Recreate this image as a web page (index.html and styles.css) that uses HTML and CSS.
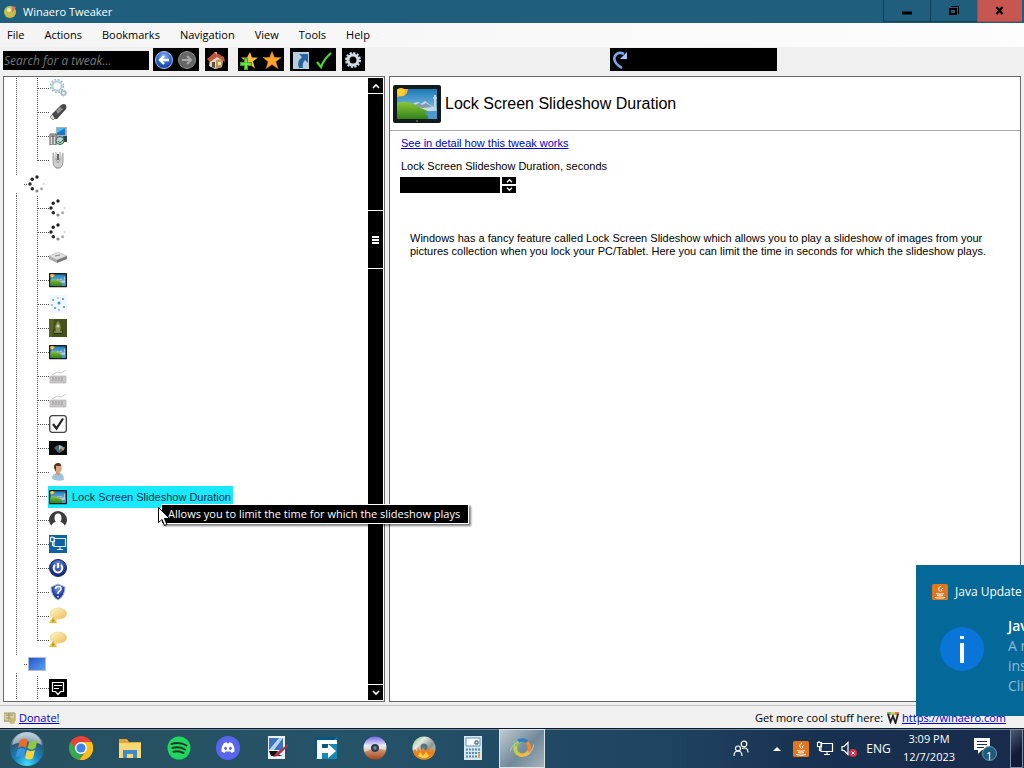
FILE: index.html
```html
<!DOCTYPE html>
<html lang="en">
<head>
<meta charset="utf-8">
<title>Winaero Tweaker</title>
<link rel="stylesheet" href="styles.css">
</head>
<body>
<svg class="defs" aria-hidden="true">
  <defs>
    <linearGradient id="sky" x1="0" y1="0" x2="0" y2="1"><stop offset="0" stop-color="#1d78b8"/><stop offset="1" stop-color="#a8dcee"/></linearGradient>
    <linearGradient id="grass" x1="0" y1="0" x2="0" y2="1"><stop offset="0" stop-color="#8cc63c"/><stop offset="1" stop-color="#2f8418"/></linearGradient>
    <radialGradient id="blueball" cx=".5" cy=".3" r=".7"><stop offset="0" stop-color="#8db8f4"/><stop offset=".6" stop-color="#2c62cc"/><stop offset="1" stop-color="#163a94"/></radialGradient>
    <radialGradient id="navyball" cx=".5" cy=".3" r=".7"><stop offset="0" stop-color="#7f9ae0"/><stop offset=".6" stop-color="#2343a8"/><stop offset="1" stop-color="#101f70"/></radialGradient>
    <radialGradient id="orb" cx=".5" cy=".95" r=".95"><stop offset="0" stop-color="#3fe0ff"/><stop offset=".4" stop-color="#1584bd"/><stop offset=".75" stop-color="#2c5672"/><stop offset="1" stop-color="#b8cfda"/></radialGradient>
    <linearGradient id="bubble" x1="0" y1="0" x2="1" y2="1"><stop offset="0" stop-color="#fff6c8"/><stop offset="1" stop-color="#ecbd55"/></linearGradient>
    <linearGradient id="blueScreen" x1="0" y1="0" x2="1" y2="1"><stop offset="0" stop-color="#2458c8"/><stop offset="1" stop-color="#5e9df0"/></linearGradient>
    <linearGradient id="disc" x1="0" y1="0" x2="0" y2="1"><stop offset="0" stop-color="#7466e8"/><stop offset=".4" stop-color="#e6e6f4"/><stop offset=".6" stop-color="#c89470"/><stop offset="1" stop-color="#a8431c"/></linearGradient>
    <linearGradient id="silver" x1="0" y1="0" x2="1" y2="1"><stop offset="0" stop-color="#72c46a"/><stop offset=".3" stop-color="#e4e7e4"/><stop offset=".6" stop-color="#8e9694"/><stop offset="1" stop-color="#d8e4c4"/></linearGradient>
    <symbol id="picture" viewBox="0 0 48 38"><rect width="48" height="38" rx="2" fill="#14191b"/><rect x="4" y="4" width="40" height="30" fill="url(#sky)"/><path d="M16 21l5-3 4-1 3 2 4-3 5 4 6 3v5l-14-2z" fill="#c4dbe6"/><path d="M22 20l4-2 3 2 4-2 6 4-10 1z" fill="#7f9cab"/><path d="M4 18q12-4 24 5 8 4 12 5l-4 6H4z" fill="url(#grass)"/><path d="M32 28q6-3 12-2v8h-9q1-3-3-6z" fill="#4b98cf"/><path d="M41 10h2v16h-2zM40 12h4v2h-4z" fill="#bed3df"/><path d="M4 4h11l-1 4-3 3-7 1z" fill="#ffb319"/><circle cx="8" cy="7" r="4" fill="#ffcc32"/><path d="M23 36h2" stroke="#8a9294"/></symbol>
    <symbol id="spinner" viewBox="0 0 18 18"><g fill="#222"><circle cx="9" cy="2" r="1.700"/><circle cx="4.200" cy="4.200" r="1.700"/><circle cx="2" cy="9" r="1.700"/><circle cx="4.300" cy="13.700" r="1.700"/><circle cx="9" cy="16" r="1.600" fill="#888"/><circle cx="13.600" cy="13.700" r="1.500" fill="#aaa"/><circle cx="15.700" cy="9" r="1.200" fill="#ddd"/></g></symbol>
    <symbol id="gears" viewBox="0 0 18 18"><circle cx="8" cy="7" r="4.600" fill="none" stroke="#b5cfdb" stroke-width="2"/><circle cx="8" cy="7" r="6.400" fill="none" stroke="#9bbac9" stroke-width="1.600" stroke-dasharray="1.800 1.550"/><circle cx="14.500" cy="14" r="2" fill="none" stroke="#a5bfcb" stroke-width="1.600"/><circle cx="14.500" cy="14" r="3" fill="none" stroke="#8eabba" stroke-dasharray="1 1"/></symbol>
    <symbol id="usb" viewBox="0 0 18 18"><path d="M1 14l3-3 3 3-3 3z" fill="#e0e0e0" stroke="#777" stroke-width=".8"/><path d="M3 11l9-9q3-2 5 0 1 2 0 4l-9 10H6z" fill="#484848"/><path d="M7 8l4-4 3 2-5 5z" fill="#909090"/></symbol>
    <symbol id="computer" viewBox="0 0 18 18"><path d="M7 0h11v10H7z" fill="#a9b1ba"/><path d="M8 1h8v7H8z" fill="#1679c7"/><path d="M8 1h8L8 6z" fill="#57b9ee"/><path d="M1 7h6v11H1z" fill="#dedede" stroke="#555"/><path d="M2 9h4M4 9v8" stroke="#444"/><circle cx="11" cy="13.500" r="4" fill="#b9d8c5" stroke="#3b5d64"/><path d="M9 14l2 2 4-4" stroke="#2b7051" fill="none"/><path d="M14 9h4v6h-3z" fill="#38424f"/></symbol>
    <symbol id="mouse" viewBox="0 0 18 18"><path d="M4 0v10q0 8 5 8t5-8V0q-2 4-2 7H6q0-4-2-7z" fill="#cfcfcf"/><path d="M4 2v8q0 7 5 7t5-7V2M7 1v8l2 3 2-3V1" fill="none" stroke="#9c9c9c"/><path d="M9 3v6" stroke="#666" stroke-width="2"/></symbol>
    <symbol id="drive" viewBox="0 0 18 18"><path d="M0 9l9-4 9 4-10 4z" fill="#dedede" stroke="#b5b5b5" stroke-width=".6"/><path d="M0 9l8 4v3l-8-4z" fill="#aaa"/><path d="M8 13l10-4v3L8 16z" fill="#777"/><path d="M6 9l5-1" stroke="#888"/></symbol>
    <symbol id="dots" viewBox="0 0 18 18"><rect width="18" height="18" fill="#f0f7ff"/><g fill="#4f8ad0"><circle cx="10" cy="8" r="1.500"/><circle cx="4" cy="5" r="1"/><circle cx="14" cy="4" r="1"/><circle cx="15" cy="12" r="1"/><circle cx="6" cy="13" r="1"/><circle cx="10" cy="15" r=".8"/><circle cx="3" cy="10" r=".8"/><circle cx="9" cy="3" r=".7"/></g></symbol>
    <symbol id="plant" viewBox="0 0 18 18"><rect width="18" height="18" fill="#44521b"/><path d="M0 0h5l-2 18H0z" fill="#566626"/><path d="M9 2q4 4 2 10H7Q5 6 9 2z" fill="#81904d"/><circle cx="9" cy="7" r="1.500" fill="#d8d6a8"/><path d="M4 11q5 5 10 0l-1 4H5z" fill="#292d18"/><path d="M5 13h8" stroke="#c4c99a"/></symbol>
    <symbol id="keyboard" viewBox="0 0 18 18"><path d="M1 9h16v7H1z" fill="#c9c7c7" stroke="#aaa" stroke-width=".6"/><path d="M3 11h12M3 13h12" stroke="#999" stroke-dasharray="2 1"/><path d="M3 8l5-3 4 1 5-3" fill="none" stroke="#bbb" stroke-width=".8"/></symbol>
    <symbol id="checkbox" viewBox="0 0 18 18"><rect x=".7" y=".7" width="16.600" height="16.600" rx="2.500" fill="#fff" stroke="#444" stroke-width="1.300"/><path d="M4 9l3.500 4.500L14 3.500" fill="none" stroke="#222" stroke-width="2.200"/></symbol>
    <symbol id="darkscreen" viewBox="0 0 18 18"><path d="M0 2h18v14H0z" fill="#080a0c"/><path d="M5 9q5-6 11 0-2 4-6 5z" fill="#53616c"/><path d="M10 6l4 2-4 3z" fill="#94c6db"/><path d="M12 9l4-1-2 4z" fill="#d6953c"/><path d="M8 10l3 2-3 1z" fill="#55748c"/></symbol>
    <symbol id="person" viewBox="0 0 18 18"><path d="M3 16q0-6 5-6h3q4 1 4 7-6 2-12-1z" fill="#9fc4df"/><path d="M7 8h4l-1 5-3-2z" fill="#cd966e"/><ellipse cx="9.500" cy="5" rx="3.300" ry="4.500" fill="#d8a884"/><path d="M9.500 0q-5 0-4.500 5l2 4V3h5q0-3-2.500-3z" fill="#55341f"/></symbol>
    <symbol id="user" viewBox="0 0 18 18"><circle cx="9" cy="9" r="9" fill="#3c3c3c"/><ellipse cx="9" cy="7" rx="3.500" ry="4.500" fill="#fff"/><path d="M2 15q2-4 5-4h4q3 0 5 4-3 4-7 3-4 1-7-3z" fill="#fff"/></symbol>
    <symbol id="network" viewBox="0 0 18 18"><path d="M5 3.500h11.500v8H5zM11 11.500v3M8 14.500h6M1.500 2.500h4v4h-4zM3.500 6.500v4H5M3 1v2" fill="none" stroke="currentColor" stroke-width="1.200"/></symbol>
    <symbol id="power" viewBox="0 0 18 18"><circle cx="9" cy="9" r="8.500" fill="url(#navyball)" stroke="#152765"/><path d="M6 6a4.300 4.300 0 1 0 6 0M9 4v5" fill="none" stroke="#fff" stroke-width="2"/></symbol>
    <symbol id="shield" viewBox="0 0 18 18"><path d="M9 1l7 3q0 9-7 13-7-4-7-13z" fill="url(#navyball)" stroke="#a9b8d5"/><path d="M6.500 6q0-2.500 3-2.500t2.500 3L9 9.500V11m0 2v1.500" stroke="#fff" fill="none" stroke-width="1.500"/></symbol>
    <symbol id="balloon" viewBox="0 0 18 18"><ellipse cx="9.500" cy="6.500" rx="8.300" ry="5.500" fill="url(#bubble)" stroke="#e6ce8b" stroke-width=".6"/><path d="M4 11l4 1-1 4z" fill="#f2d57d"/><path d="M4 10l4 6H0z" fill="#e7bd34"/><path d="M4 12v3" stroke="#a08028"/></symbol>
    <symbol id="desktop" viewBox="0 0 18 18"><path d="M0 2h18v14H0z" fill="#aabddd"/><path d="M1 3h16v12H1z" fill="url(#blueScreen)"/></symbol>
    <symbol id="message" viewBox="0 0 18 18"><rect width="18" height="18"/><path d="M3.500 3.500h11v9h-3L9 15.500l-2.500-3h-3zM5 6.500h8M5 9.500h5" fill="none" stroke="#fff" stroke-width="1.200"/></symbol>
    <symbol id="java" viewBox="0 0 16 16"><rect width="16" height="16" rx="1.500" fill="#e1761f"/><path d="M9 2q-4 2-2 4t1 2M11 4q-3 2-1 3M4 9.500q4 1.500 8 0M5 11.500q3 1 6 0M3 13.500q5 1.500 10 0" stroke="#fff" fill="none"/></symbol>
    <symbol id="logo" viewBox="0 0 24 24"><g fill="none" stroke-width="3.600"><path d="M5 14a8 8 0 0 1 6-9" stroke="#8dc852"/><path d="M8 5q7-3 11 3" stroke="#327fc6"/><path d="M17 6q5 6 0 12" stroke="#f18a32"/><path d="M19 16q-7 6-12 1" stroke="#f3ba38"/><path d="M8 18q-4-4-2-8" stroke="#bed048"/></g><path d="M0 15Q3 7 9 6M24 8q-2 10-9 12" fill="none" stroke="#b9c9b9"/></symbol>
  </defs>
</svg>

<div class="window">
  <header class="titlebar">
    <svg class="app-icon" viewBox="0 0 14 14"><circle cx="7" cy="7" r="6" fill="#c9bc4a"/><path d="M2 4q3-4 7-2L6 7z" fill="#a5c975"/><path d="M9 1l4 1-4 6z" fill="#d6785b"/><circle cx="6" cy="5" r="2" fill="#f0eba5"/></svg>
    <h1 class="title">Winaero Tweaker</h1>
    <div class="window-buttons">
      <button class="win-btn" aria-label="Minimize"><svg viewBox="0 0 12 12"><path d="M1 8h10" stroke="#000" stroke-width="3"/></svg></button>
      <button class="win-btn" aria-label="Restore"><svg viewBox="0 0 12 12"><path d="M2 4h6v5H2z" fill="none" stroke="#000" stroke-width="2"/><path d="M3 1.500h7.500V9" fill="none" stroke="#000"/></svg></button>
      <button class="win-btn close" aria-label="Close"><svg viewBox="0 0 12 12"><path d="M2.500 2l6 7M8.500 2l-6 7" stroke="#000" stroke-width="2.200"/></svg></button>
    </div>
  </header>

  <nav class="menubar">
    <button>File</button><button>Actions</button><button>Bookmarks</button><button>Navigation</button><button>View</button><button>Tools</button><button>Help</button>
  </nav>

  <div class="toolbar">
    <input class="search" type="text" placeholder="Search for a tweak..." aria-label="Search for a tweak">
    <div class="tools">
      <button aria-label="Back"><svg viewBox="0 0 20 20"><circle cx="10" cy="10" r="8.500" fill="url(#blueball)" stroke="#a9c5f1"/><path d="M15 10H6m4-4l-4 4 4 4" fill="none" stroke="#fff" stroke-width="2.400"/></svg></button>
      <button aria-label="Forward"><svg viewBox="0 0 20 20"><circle cx="10" cy="10" r="8.500" fill="#666" stroke="#8b8b8b"/><path d="M5 10h9m-4-4l4 4-4 4" fill="none" stroke="#aaa" stroke-width="2"/></svg></button>
    </div>
    <div class="tools home">
      <button aria-label="Home"><svg viewBox="0 0 20 20"><path d="M4 9l6-5 7 5-1 8-7 2-6-3z" fill="#e4d7ba"/><path d="M10 10l7-1-1 8-6 2z" fill="#b79967"/><path d="M1 9l8-7 9 5 1 5-8-5-7 5z" fill="#bd563c"/><path d="M8 2h3v3z" fill="#ef9a79"/><path d="M6 12h3v6l-3-1z" fill="#63503e"/><path d="M12 12h3v3h-3z" fill="#f5e2a1"/></svg></button>
    </div>
    <div class="tools bookmarks">
      <button aria-label="Add bookmark"><svg viewBox="0 0 20 20"><path d="M11 2l2 5.500h6l-5 4 2 7-5-4-5 4 1-7-5-4h6z" fill="#f6ba40"/><path d="M5 8h4v4h4v4H9v4H5v-4H1v-4h4z" fill="#36a826"/><path d="M7 9v10M2 14h10" stroke="#8aea55" stroke-width="1.500"/></svg></button>
      <button aria-label="Bookmarks"><svg viewBox="0 0 20 20"><path d="M10 1.500l2.400 6H19l-5.200 4.200 2 6.800-5.800-4-5.800 4 2-6.800L1 7.500h6.600z" fill="#ffa329" stroke="#d98219" stroke-width=".6"/></svg></button>
    </div>
    <div class="tools">
      <button aria-label="Shortcut"><svg viewBox="0 0 20 20"><rect x="2" y="2" width="16" height="17" fill="#b9cde1"/><path d="M8 4h9v9l-3-3q-3 3-2 8H8q-3-6 3-11z" fill="#28659f"/></svg></button>
      <button aria-label="Apply"><svg viewBox="0 0 20 20"><path d="M3 12l4 5Q10 9 17 3" fill="none" stroke="#45dc2f" stroke-width="2.200"/></svg></button>
    </div>
    <div class="tools">
      <button aria-label="Settings"><svg viewBox="0 0 20 20"><circle cx="10" cy="10" r="5" fill="none" stroke="#d3dce4" stroke-width="3"/><circle cx="10" cy="10" r="7" fill="none" stroke="#d3dce4" stroke-width="2" stroke-dasharray="2.200 1.465"/></svg></button>
    </div>
    <button class="revert" aria-label="Revert"><svg viewBox="0 0 20 20"><path d="M11 18Q1 12 4 6q3-5 9-2" fill="none" stroke="#79a5ee" stroke-width="2.600"/><path d="M16 2v7H9z" fill="#a1c5ff"/></svg></button>
  </div>

  <main class="panes">
    <section class="pane tree-pane">
      <ul class="tree">
        <li class="row"><svg><use href="#gears"/></svg></li>
        <li class="row"><svg><use href="#usb"/></svg></li>
        <li class="row"><svg><use href="#computer"/></svg></li>
        <li class="row last"><svg><use href="#mouse"/></svg></li>
        <li class="row group"><svg><use href="#spinner"/></svg></li>
        <li class="row"><svg><use href="#spinner"/></svg></li>
        <li class="row"><svg><use href="#spinner"/></svg></li>
        <li class="row"><svg><use href="#drive"/></svg></li>
        <li class="row"><svg><use href="#picture"/></svg></li>
        <li class="row"><svg><use href="#dots"/></svg></li>
        <li class="row"><svg><use href="#plant"/></svg></li>
        <li class="row"><svg><use href="#picture"/></svg></li>
        <li class="row"><svg><use href="#keyboard"/></svg></li>
        <li class="row"><svg><use href="#keyboard"/></svg></li>
        <li class="row"><svg><use href="#checkbox"/></svg></li>
        <li class="row"><svg><use href="#darkscreen"/></svg></li>
        <li class="row"><svg><use href="#person"/></svg></li>
        <li class="row"><a class="selected" href="#slideshow"><svg><use href="#picture"/></svg><span>Lock Screen Slideshow Duration</span></a></li>
        <li class="row"><svg><use href="#user"/></svg></li>
        <li class="row"><svg class="net"><use href="#network"/></svg></li>
        <li class="row"><svg><use href="#power"/></svg></li>
        <li class="row"><svg><use href="#shield"/></svg></li>
        <li class="row"><svg><use href="#balloon"/></svg></li>
        <li class="row last"><svg><use href="#balloon"/></svg></li>
        <li class="row group"><svg><use href="#desktop"/></svg></li>
        <li class="row"><svg><use href="#message"/></svg></li>
      </ul>
      <div class="scrollbar">
        <button aria-label="Scroll up"><svg viewBox="0 0 8 6"><path d="M1 5l3-3 3 3" fill="none" stroke="#fff" stroke-width="1.600"/></svg></button>
        <div class="track-top"></div>
        <div class="thumb"><i></i><i></i><i></i></div>
        <div class="track-bottom"></div>
        <button aria-label="Scroll down"><svg viewBox="0 0 8 6"><path d="M1 1l3 3 3-3" fill="none" stroke="#fff" stroke-width="1.600"/></svg></button>
      </div>
    </section>

    <section class="pane detail" id="slideshow">
      <div class="detail-head">
        <svg class="hero" viewBox="0 0 48 38"><use href="#picture"/></svg>
        <h2>Lock Screen Slideshow Duration</h2>
      </div>
      <div class="detail-body">
        <a class="more" href="#detail">See in detail how this tweak works</a>
        <label for="seconds">Lock Screen Slideshow Duration, seconds</label>
        <div class="spin">
          <input id="seconds" type="text">
          <div class="spin-buttons">
            <button aria-label="Increase"><svg viewBox="0 0 8 6"><path d="M1 5l3-3 3 3" fill="none" stroke="#fff" stroke-width="1.600"/></svg></button>
            <button aria-label="Decrease"><svg viewBox="0 0 8 6"><path d="M1 1l3 3 3-3" fill="none" stroke="#fff" stroke-width="1.600"/></svg></button>
          </div>
        </div>
        <p class="description">Windows has a fancy feature called Lock Screen Slideshow which allows you to play a slideshow of images from your pictures collection when you lock your PC/Tablet. Here you can limit the time in seconds for which the slideshow plays.</p>
      </div>
    </section>
  </main>

  <footer class="statusbar">
    <svg class="donate-icon" viewBox="0 0 12 12"><path d="M0 1h11v9H0z" fill="#d9d0a5"/><path d="M0 1h11v8H0zM2 3h7M2 6h5M5 1v8" fill="none" stroke="#9e9668"/><circle cx="8" cy="9" r="3" fill="#c9b976"/></svg>
    <a href="#donate">Donate!</a>
    <span class="cool">Get more cool stuff here:</span>
    <svg class="w-icon" viewBox="0 0 12 12"><path d="M0 0h12v3H0z" fill="#e8ce62"/><path d="M0 0h4v3H0z" fill="#79b765"/><path d="M8 0h4v3H8z" fill="#da795d"/><path d="M1 2l2.500 8L6 4l2.500 7L11 2" fill="none" stroke="#222" stroke-width="1.800"/></svg>
    <a href="#winaero">https://winaero.com</a>
  </footer>
</div>

<div class="tooltip" role="tooltip">Allows you to limit the time for which the slideshow plays</div>
<svg class="cursor" viewBox="0 0 12 19"><path d="M.5.5v15l3.500-3 2.500 6 2.500-1-2.500-6h5z" fill="#fff" stroke="#000"/></svg>

<aside class="toast">
  <div class="toast-head"><svg><use href="#java"/></svg><span>Java Update</span></div>
  <div class="toast-body">
    <svg viewBox="0 0 44 44"><circle cx="22" cy="22" r="22" fill="#0975d8"/><path d="M20 16h4v20h-4zM20 9h4v3h-4z" fill="#fff"/></svg>
    <div class="toast-text"><strong>Jav</strong><span>A n</span><span>ins</span><span>Cli</span></div>
  </div>
</aside>

<nav class="taskbar">
  <button class="start" aria-label="Start"><svg viewBox="0 0 36 36"><circle cx="18" cy="18" r="17" fill="url(#orb)"/><path d="M3 14Q6 2 18 2t15 12q-14-7-30 0z" fill="#d7e4ea" opacity=".6"/><path d="M11 9q4-3 8 0l-2 8q-4-3-8 0z" fill="#eb6a2e"/><path d="M20.500 10q4 2 8-1l-2 8q-4 3-8 0z" fill="#93c83d"/><path d="M8.500 18.500q4-3 8 0l-2 8q-4-3-8 0z" fill="#3c93e0"/><path d="M18 19q4 2 8 0l-2 8q-4 3-8 0z" fill="#ffd13d"/></svg></button>
  <button class="task" aria-label="Chrome"><svg viewBox="0 0 24 24"><circle cx="12" cy="12" r="12" fill="#e84335"/><path d="M1.600 6a12 12 0 0 0 8.900 17.900L17 13H7z" fill="#35a853"/><path d="M22.500 6H12v6l5 3-6.500 9A12 12 0 0 0 22.500 6z" fill="#fbbd17"/><circle cx="12" cy="12" r="6" fill="#fff"/><circle cx="12" cy="12" r="4.600" fill="#3f82e8"/></svg></button>
  <button class="task" aria-label="File Explorer"><svg viewBox="0 0 24 24"><path d="M1 3h8l2 3h12v4H1z" fill="#e5a52f"/><path d="M1 7h22v15H1z" fill="#f8d776"/><path d="M5 14h14v8h-4v-4H9v4H5z" fill="#3f8bc9"/></svg></button>
  <button class="task" aria-label="Spotify"><svg viewBox="0 0 24 24"><circle cx="12" cy="12" r="11.500" fill="#20d760"/><path d="M4.500 8q8-2.500 15 1.500M5.500 12q6.500-2 12.500 1.500M6.500 15.800q5-1.500 10 1.200" fill="none" stroke="#153827" stroke-width="2" stroke-linecap="round"/></svg></button>
  <button class="task" aria-label="Discord"><svg viewBox="0 0 24 24"><circle cx="12" cy="12" r="12" fill="#5865ec"/><path d="M8 7l2.500-.7.600 1h1.800l.6-1L16 7q3 4 2.500 8.500l-3 1.500-1-1.500h-5l-1 1.500-3-1.500Q5 11 8 7z" fill="#fff"/><ellipse cx="9.600" cy="12.300" rx="1.400" ry="1.600" fill="#5865ec"/><ellipse cx="14.400" cy="12.300" rx="1.400" ry="1.600" fill="#5865ec"/></svg></button>
  <button class="task" aria-label="Screen editor"><svg viewBox="0 0 24 24"><path d="M3 0h17v23H3z" fill="#edf1f6"/><path d="M4 2h14v12H4z" fill="#3d72c4"/><path d="M4 14L14 2h4L9 14z" fill="#b7d5f3"/><path d="M4 15h9l-2 3 7 2H6z" fill="#111"/><path d="M23 8L11 17l-3 4 5-1L23 10z" fill="#ac354b"/></svg></button>
  <button class="task" aria-label="Transfer"><svg viewBox="0 0 24 24"><path d="M1 1h22v22H1z" fill="#1686b5"/><path d="M1 1h22L1 23z" fill="#06567e"/><path d="M3 4h20v4H8v4h6V8l8 7-8 7v-5H8v6H3z" fill="#fff"/></svg></button>
  <button class="task" aria-label="Disc utility"><svg viewBox="0 0 24 24"><circle cx="12" cy="12" r="11.500" fill="url(#disc)"/><path d="M12 12L1 8v8zM12 12l11-5v7z" fill="#f1f1fa" opacity=".6"/><circle cx="12" cy="12" r="4" fill="#333b4d"/><circle cx="12" cy="12" r="1.700" fill="#718c9c"/></svg></button>
  <button class="task" aria-label="Disc burner"><svg viewBox="0 0 24 24"><circle cx="12" cy="12" r="11.500" fill="url(#silver)"/><circle cx="12" cy="11" r="3.500" fill="#56767d"/><path d="M1 15l2-2 2 3 1-5 3 5 2-5 3 5 3-5 1 4 3-2 2 2q-2 8.500-11 8.500T1 15z" fill="#ef811d"/><path d="M6 20l2-4 3 4 3-4 3 4q-5 4-11 0z" fill="#ffd545"/></svg></button>
  <button class="task" aria-label="Calculator"><svg viewBox="0 0 24 24"><path d="M3 0h18v24H3z" fill="#d4e9f3"/><path d="M5 2h14v8H5z" fill="#fff" stroke="#5e91b3"/><path d="M14 5h3v3h-3z" fill="none" stroke="#264c68"/><path d="M5 13.500h14M5 17h14M5 20.500h14" stroke="#588cae" stroke-width="2" stroke-dasharray="2 1"/><path d="M17 17h2v5h-2z" fill="#eaa336"/></svg></button>
  <button class="task active" aria-label="Winaero Tweaker"><svg><use href="#logo"/></svg></button>

  <div class="tray">
    <button class="people" aria-label="People"><svg viewBox="0 0 18 18" fill="none" stroke="#fff" stroke-width="1.200"><circle cx="12" cy="4" r="2.800"/><circle cx="6" cy="8.500" r="2.500"/><path d="M2 16q0-5 4-5t4 5M10 8.500q6-2 6 4"/></svg></button>
    <button class="tray-btn" aria-label="Show hidden icons"><svg viewBox="0 0 16 16"><path d="M4 10l4-4 4 4z" fill="#fff"/></svg></button>
    <button class="tray-btn" aria-label="Java"><svg><use href="#java"/></svg></button>
    <button class="tray-btn" aria-label="Network"><svg class="tray-net"><use href="#network"/></svg></button>
    <button class="tray-btn" aria-label="Volume muted"><svg viewBox="0 0 16 16"><path d="M1 5.500h2l4-4v12l-4-4H1z" fill="none" stroke="#fff" stroke-width="1.200"/><circle cx="12" cy="12" r="4" fill="#d83246"/><path d="M10.500 10.500l3 3m0-3l-3 3" stroke="#fff"/></svg></button>
    <button class="lang">ENG</button>
    <button class="clock"><span>3:09 PM</span><span>12/7/2023</span></button>
    <button class="notify" aria-label="1 notification"><svg viewBox="0 0 24 24"><path d="M1 1h16v12H9l-4 4v-4H1z" fill="#fff"/><path d="M4 4.500h10M4 7.500h10M4 10.500h7" stroke="#1b3454"/><circle cx="16.500" cy="16.500" r="7" fill="#1c5c78" stroke="#6e9eaf"/></svg><span>1</span></button>
    <button class="peek" aria-label="Show desktop"></button>
  </div>
</nav>
</body>
</html>
```
FILE: styles.css
```css
* { box-sizing: border-box; }
html, body { height: 100%; }
body {
  margin: 0;
  display: flex;
  flex-direction: column;
  overflow: hidden;
  background: #f0f0f0;
  color: #000;
  font-family: "Open Sans", "Noto Sans", sans-serif;
  font-size: 11px;
}
button { border: 0; padding: 0; background: none; color: inherit; font: inherit; }
input { border: 0; border-radius: 0; }
h1, h2, p, ul { margin: 0; padding: 0; font-weight: normal; }
svg { display: block; flex: none; }
a { color: #0000d0; }
.defs { position: absolute; width: 0; height: 0; }

.window { flex: 1; min-height: 0; display: flex; flex-direction: column; }

/* Title bar */
.titlebar { display: flex; align-items: center; height: 23px; background: #205e7e; color: #fff; }
.app-icon { width: 14px; height: 14px; margin: 0 6px 0 3px; }
.title { flex: 1; font-size: 11px; }
.window-buttons { display: flex; align-self: flex-start; padding-right: 2px; }
.win-btn { display: flex; align-items: center; justify-content: center; width: 47px; height: 22px; border-left: 1px solid #123f57; border-bottom: 1px solid #123f57; }
.win-btn svg { width: 12px; height: 12px; }
.win-btn.close { width: 45px; background: #c75650; border-color: #a04c4c; }

/* Menu bar */
.menubar { display: flex; align-items: center; gap: 20px; height: 24px; padding: 0 0 2px 7px; background: linear-gradient(90deg, #f4f4f4, #fdfdfd); }

/* Toolbar */
.toolbar { display: flex; height: 29px; padding: 1px 3px; }
.search { width: 146px; height: 19px; margin: 3px 4px 0 0; padding: 0 1px; background: #000; color: #fff; font: italic 12px "Open Sans", sans-serif; }
.search::placeholder { color: #777; opacity: 1; }
.tools { display: flex; height: 23px; margin-right: 6px; background: #000; }
.tools.home { margin-right: 10px; }
.tools button, .revert { display: flex; align-items: center; padding-left: 1px; width: 23px; height: 23px; }
.tools svg, .revert svg { width: 20px; height: 20px; }
.revert { width: 167px; margin-left: 239px; background: #000; }

/* Panes */
.panes { flex: 1; min-height: 0; display: flex; gap: 4px; padding: 0 3px; }
.pane { border: 1px solid #686868; background: #fff; overflow: hidden; }
.tree-pane { display: flex; flex: none; width: 382px; padding-right: 1px; }
.detail { flex: 1; }

/* Tree */
.tree { flex: 1; margin-top: -1px; list-style: none; font: 11px/22px "Liberation Sans", Arial, sans-serif; }
.row {
  --v: repeating-linear-gradient(180deg, #555 0 1px, transparent 1px 2px);
  --h: repeating-linear-gradient(90deg, #555 0 1px, transparent 1px 2px);
  display: flex;
  align-items: center;
  height: 24px;
  padding-left: 45px;
  background: var(--v) 12px 0 / 1px 24px no-repeat, var(--v) 33px 0 / 1px 24px no-repeat, var(--h) 34px 12px / 11px 1px no-repeat;
}
.row.last { background: var(--v) 12px 0 / 1px 24px no-repeat, var(--v) 33px 0 / 1px 14px no-repeat, var(--h) 34px 12px / 11px 1px no-repeat; }
.row.group { padding-left: 24px; background: var(--v) 12px 0 / 1px 4px no-repeat, var(--v) 12px 21px / 1px 3px no-repeat, var(--h) 20px 12px / 4px 1px no-repeat; }
.row svg { width: 18px; height: 18px; }
.row .net { background: #1160a0; color: #d8ecff; }
.selected { display: flex; align-items: center; height: 22px; margin: 1px 0 0 -1px; padding: 0 2px 0 1px; gap: 5px; background: #19e9fb; color: #04324a; text-decoration: none; }

/* Scroll bar */
.scrollbar { display: flex; flex-direction: column; gap: 1px; width: 15px; margin: 1px 0; }
.scrollbar button { display: flex; align-items: center; justify-content: center; height: 15px; background: #000; }
.scrollbar svg { width: 8px; height: 6px; }
.track-top { flex: 116; background: #000; }
.thumb { flex: 57; display: flex; flex-direction: column; align-items: center; justify-content: center; gap: 1px; background: #000; }
.thumb i { width: 7px; height: 2px; background: #fff; }
.track-bottom { flex: 415; background: #000; }

/* Detail pane */
.detail { font: 11px/13px "Liberation Sans", Arial, sans-serif; }
.detail-head { display: flex; align-items: center; gap: 4px; height: 54px; padding-left: 3px; border-bottom: 1px solid #a8a8a8; }
.hero { width: 48px; height: 38px; }
.detail-head h2 { padding-top: 1px; font-size: 16px; line-height: 20px; }
.detail-body { display: flex; flex-direction: column; align-items: flex-start; padding: 6px 10px; }
.detail-body label { margin: 10px 0 4px 1px; }
.more { margin-left: 1px; }
.spin { display: flex; gap: 2px; }
.spin input { width: 100px; height: 16px; background: #000; color: #fff; }
.spin-buttons { display: flex; flex-direction: column; gap: 2px; }
.spin-buttons button { display: flex; align-items: center; justify-content: center; width: 14px; height: 7px; background: #000; }
.spin-buttons svg { width: 7px; height: 5px; }
.description { max-width: 580px; margin: 39px 0 0 10px; }

/* Status bar */
.statusbar { display: flex; align-items: center; height: 23px; margin-top: 3px; padding: 1px 18px 0 4px; border-top: 1px solid #c0c0c0; }
.donate-icon { width: 12px; height: 12px; margin-right: 3px; }
.cool { margin-left: auto; }
.w-icon { width: 12px; height: 12px; margin: 0 3px 0 4px; }

/* Tooltip and pointer */
.tooltip { position: absolute; left: 161px; top: 504px; height: 20px; padding: 0 8px 0 6px; border: 1px solid #fff; background: #000; color: #fff; line-height: 18px; white-space: nowrap; box-shadow: 2px 2px 2px rgba(0, 0, 0, .5); }
.cursor { position: absolute; left: 158px; top: 507px; width: 12px; height: 19px; }

/* Notification toast */
.toast { position: absolute; right: 0; bottom: 52px; width: 108px; height: 151px; padding: 18px 0 0 16px; overflow: hidden; background: #046899; color: #fff; }
.toast-head { display: flex; align-items: center; gap: 7px; height: 17px; font-size: 12px; white-space: nowrap; }
.toast-head svg { width: 16px; height: 16px; }
.toast-body { display: flex; gap: 24px; padding: 16px 0 0 8px; }
.toast-body svg { width: 44px; height: 44px; margin-top: 11px; }
.toast-text { display: flex; flex-direction: column; font-size: 14px; line-height: 20px; white-space: nowrap; color: #8dbcd8; }
.toast-text strong { color: #fff; font-weight: 600; }

/* Taskbar */
.taskbar { flex: none; display: flex; height: 40px; border-top: 1px solid #0b1a2a; background: linear-gradient(90deg, #26505f, #255368 35%, #1f4361 65%, #183150 80%, #192b4c); box-shadow: inset 0 1px #6c8695; color: #fff; }
.start { display: flex; align-items: center; width: 56px; padding-left: 9px; }
.start svg { width: 36px; height: 36px; }
.task { display: flex; align-items: center; justify-content: center; width: 49px; padding-bottom: 2px; }
.task svg { width: 24px; height: 24px; }
.task.active { width: 46px; margin-left: 2px; border: 1px solid #dce4e8; background: linear-gradient(135deg, #c1cbd0, #71899a 55%, #a5b3bb); }
.tray { display: flex; margin-left: auto; padding-right: 1px; }
.tray button { display: flex; align-items: center; justify-content: center; }
.tray .people { width: 24px; margin-right: 12px; }
.people svg { width: 18px; height: 18px; }
.tray .tray-btn { width: 24px; }
.tray-btn svg { width: 16px; height: 16px; }
.tray-btn .tray-net { width: 18px; height: 18px; }
.tray .lang { width: 35px; font-size: 12px; }
.tray .clock { flex-direction: column; width: 66px; padding-bottom: 2px; line-height: 18px; }
.tray .notify { position: relative; width: 48px; padding-right: 3px; }
.notify svg { width: 24px; height: 24px; }
.notify span { position: absolute; left: 24px; top: 18px; font-size: 11px; line-height: 18px; }
.tray .peek { width: 13px; border: 1px solid #7d8ca0; background: linear-gradient(135deg, #4d5c74, #101b35 60%); }
```
